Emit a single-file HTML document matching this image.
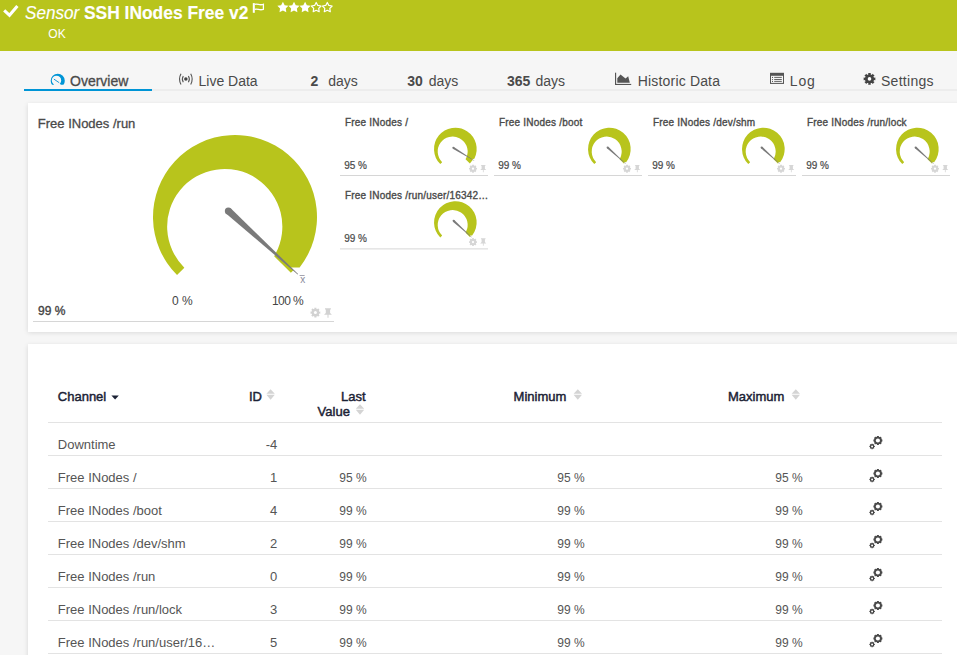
<!DOCTYPE html>
<html><head><meta charset="utf-8"><style>
html,body{margin:0;padding:0;width:957px;height:655px;overflow:hidden;background:#f6f6f6;position:relative;font-family:"Liberation Sans", sans-serif}
.t{position:absolute;white-space:nowrap;font-family:"Liberation Sans", sans-serif}
svg{overflow:visible}
</style></head><body>
<div style="position:absolute;left:0;top:0;width:957px;height:51px;background:#b8c41c"></div>
<svg style="position:absolute;left:0;top:0" width="40" height="30"><path d="M4.2,10.4 L9.5,15.3 L17.4,6.1" fill="none" stroke="#fff" stroke-width="3.1" stroke-linecap="butt" stroke-linejoin="miter"/></svg>
<div class="t" style="left:25.00px;top:4.04px;font-size:18.5px;line-height:18.5px;color:#fff;font-weight:normal;font-style:italic;transform:scaleX(0.925);transform-origin:0 0;-webkit-text-stroke:0.15px #fff">Sensor</div>
<div class="t" style="left:84.40px;top:4.04px;font-size:18.5px;line-height:18.5px;color:#fff;font-weight:bold;font-style:normal;transform:scaleX(0.94);transform-origin:0 0;-webkit-text-stroke:0.15px #fff">SSH INodes Free v2</div>
<svg style="position:absolute;left:0;top:0" width="280" height="16"><rect x="252.8" y="3.1" width="2" height="9.7" fill="#fff"/><path d="M254.6,4.4 C257.5,3.2 259.5,5.8 263.4,4.3 V9.3 C259.5,10.8 257.5,8.2 254.6,9.4" fill="none" stroke="#fff" stroke-width="1.3"/></svg>
<svg style="position:absolute;left:0;top:0" width="400" height="20"><path d="M282.90,1.80 L284.67,5.16 L288.42,5.81 L285.77,8.53 L286.31,12.29 L282.90,10.62 L279.49,12.29 L280.03,8.53 L277.38,5.81 L281.13,5.16 Z" fill="#fff"/><path d="M294.00,1.80 L295.77,5.16 L299.52,5.81 L296.87,8.53 L297.41,12.29 L294.00,10.62 L290.59,12.29 L291.13,8.53 L288.48,5.81 L292.23,5.16 Z" fill="#fff"/><path d="M305.10,1.80 L306.87,5.16 L310.62,5.81 L307.97,8.53 L308.51,12.29 L305.10,10.62 L301.69,12.29 L302.23,8.53 L299.58,5.81 L303.33,5.16 Z" fill="#fff"/><path d="M316.20,2.50 L317.76,5.45 L321.05,6.02 L318.72,8.42 L319.20,11.73 L316.20,10.25 L313.20,11.73 L313.68,8.42 L311.35,6.02 L314.64,5.45 Z" fill="none" stroke="#fff" stroke-width="1.2" stroke-linejoin="round"/><path d="M327.30,2.50 L328.86,5.45 L332.15,6.02 L329.82,8.42 L330.30,11.73 L327.30,10.25 L324.30,11.73 L324.78,8.42 L322.45,6.02 L325.74,5.45 Z" fill="none" stroke="#fff" stroke-width="1.2" stroke-linejoin="round"/></svg>
<div class="t" style="left:48.30px;top:28.04px;font-size:12px;line-height:12px;color:#fff;font-weight:normal;font-style:normal;">OK</div>
<div style="position:absolute;left:152px;top:89px;width:805px;height:2px;background:#ededed"></div>
<div style="position:absolute;left:24px;top:89px;width:128px;height:2px;background:#0095d6"></div>
<svg style="position:absolute;left:0;top:0" width="200" height="100"><defs><clipPath id="ovc"><path d="M40,60 H80 V84.7 H60.8 L57.5,80 L53.6,84.7 H40 Z"/></clipPath></defs><path clip-path="url(#ovc)" fill-rule="evenodd" d="M50.7,80.75 a7.05,7.05 0 1 0 14.1,0 a7.05,7.05 0 1 0 -14.1,0 Z M51.8,80.4 a4.7,4.7 0 1 0 9.4,0 a4.7,4.7 0 1 0 -9.4,0 Z" fill="#0095d6"/><path d="M54.2,79.3 L58.9,82.5" stroke="#1a9ad6" stroke-width="1.0" stroke-linecap="round"/></svg>
<div class="t" style="left:70.00px;top:73.85px;font-size:14px;line-height:14px;color:#4a4a4a;font-weight:normal;font-style:normal;-webkit-text-stroke:0.3px #4a4a4a">Overview</div>
<svg style="position:absolute;left:0;top:0" width="260" height="100"><circle cx="185.85" cy="79.1" r="1.75" fill="#444"/><path d="M181,73.7 A11.1,11.1 0 0 0 181,84.4" fill="none" stroke="#555" stroke-width="1.1"/><path d="M190.7,73.7 A11.1,11.1 0 0 1 190.7,84.4" fill="none" stroke="#555" stroke-width="1.1"/><path d="M183.3,76 A5.8,5.8 0 0 0 183.3,82.2" fill="none" stroke="#555" stroke-width="1.1"/><path d="M188.4,76 A5.8,5.8 0 0 1 188.4,82.2" fill="none" stroke="#555" stroke-width="1.1"/></svg>
<div class="t" style="left:198.50px;top:73.85px;font-size:14px;line-height:14px;color:#4a4a4a;font-weight:normal;font-style:normal;">Live Data</div>
<div class="t" style="left:310.50px;top:73.85px;font-size:14px;line-height:14px;color:#4a4a4a;font-weight:bold;font-style:normal;">2</div>
<div class="t" style="left:328.30px;top:73.85px;font-size:14px;line-height:14px;color:#4a4a4a;font-weight:normal;font-style:normal;">days</div>
<div class="t" style="left:407.30px;top:73.85px;font-size:14px;line-height:14px;color:#4a4a4a;font-weight:bold;font-style:normal;">30</div>
<div class="t" style="left:428.80px;top:73.85px;font-size:14px;line-height:14px;color:#4a4a4a;font-weight:normal;font-style:normal;">days</div>
<div class="t" style="left:507.00px;top:73.85px;font-size:14px;line-height:14px;color:#4a4a4a;font-weight:bold;font-style:normal;">365</div>
<div class="t" style="left:535.50px;top:73.85px;font-size:14px;line-height:14px;color:#4a4a4a;font-weight:normal;font-style:normal;">days</div>
<svg style="position:absolute;left:0;top:0" width="957" height="100"><rect x="615" y="72.7" width="1.15" height="12.3" fill="#555"/><rect x="615" y="83.9" width="16.2" height="1.1" fill="#555"/><path d="M617.3,82.8 V78.2 L620.5,74.6 L625.5,78.6 L628.2,76.2 L629.8,82.8 Z" fill="#555"/><rect x="770.5" y="73.4" width="13" height="10" fill="none" stroke="#555" stroke-width="1"/><rect x="770" y="72.9" width="14" height="2.9" fill="#555"/><path d="M774.2,77.4 H781.8 M774.2,79.5 H781.8 M774.2,81.4 H781.8" stroke="#555" stroke-width="0.9"/><circle cx="772.5" cy="77.4" r="0.55" fill="#555"/><circle cx="772.5" cy="79.5" r="0.55" fill="#555"/><circle cx="772.5" cy="81.4" r="0.55" fill="#555"/><path d="M875.35,77.55 L875.35,80.25 L873.82,79.94 L873.29,81.22 L874.59,82.08 L872.68,83.99 L871.82,82.69 L870.54,83.22 L870.85,84.75 L868.15,84.75 L868.46,83.22 L867.18,82.69 L866.32,83.99 L864.41,82.08 L865.71,81.22 L865.18,79.94 L863.65,80.25 L863.65,77.55 L865.18,77.86 L865.71,76.58 L864.41,75.72 L866.32,73.81 L867.18,75.11 L868.46,74.58 L868.15,73.05 L870.85,73.05 L870.54,74.58 L871.82,75.11 L872.68,73.81 L874.59,75.72 L873.29,76.58 L873.82,77.86 Z" fill="#444"/><circle cx="869.5" cy="78.9" r="4.32" fill="#444"/><circle cx="869.5" cy="78.9" r="1.80" fill="#fff"/></svg>
<div class="t" style="left:637.80px;top:73.85px;font-size:14px;line-height:14px;color:#4a4a4a;font-weight:normal;font-style:normal;letter-spacing:0.17px">Historic Data</div>
<div class="t" style="left:789.80px;top:73.85px;font-size:14px;line-height:14px;color:#4a4a4a;font-weight:normal;font-style:normal;letter-spacing:0.8px">Log</div>
<div class="t" style="left:881.00px;top:73.85px;font-size:14px;line-height:14px;color:#4a4a4a;font-weight:normal;font-style:normal;letter-spacing:0.28px">Settings</div>
<div style="position:absolute;left:28px;top:103px;width:960px;height:229px;background:#fff;box-shadow:0 0.5px 5px rgba(0,0,0,0.13)"></div>
<div class="t" style="left:37.80px;top:116.70px;font-size:13px;line-height:13px;color:#4a4a4a;font-weight:normal;font-style:normal;-webkit-text-stroke:0.3px #4a4a4a">Free INodes /run</div>
<svg style="position:absolute;left:0;top:0" width="957" height="340"><g transform="translate(235,217) scale(1.0)"><path d="M-57.98,57.98 A82.0,82.0 0 1 1 64.62,50.48 L55.10,50.14 L40.50,36.85 A57.6,57.6 0 1 0 -50.65,50.65 Z M40.50,36.85 L58.43,53.17 L55.86,55.86 L39.18,39.18 Z" fill="#b8c41c"/><path d="M-9.01,-3.47 L62.67,57.43 L63.07,56.98 L-4.30,-8.65 Z" fill="#7a7a7a"/><circle cx="-6.66" cy="-6.06" r="3.5" fill="#7a7a7a"/></g><rect x="299.6" y="275" width="5" height="0.9" fill="#9a9aa8"/><path d="M320.27,311.48 L320.27,313.72 L319.19,313.51 L318.73,314.64 L319.64,315.25 L318.05,316.84 L317.44,315.93 L316.31,316.39 L316.52,317.47 L314.28,317.47 L314.49,316.39 L313.36,315.93 L312.75,316.84 L311.16,315.25 L312.07,314.64 L311.61,313.51 L310.53,313.72 L310.53,311.48 L311.61,311.69 L312.07,310.56 L311.16,309.95 L312.75,308.36 L313.36,309.27 L314.49,308.81 L314.28,307.73 L316.52,307.73 L316.31,308.81 L317.44,309.27 L318.05,308.36 L319.64,309.95 L318.73,310.56 L319.19,311.69 Z" fill="#d2d2d2"/><circle cx="315.4" cy="312.6" r="3.70" fill="#d2d2d2"/><circle cx="315.4" cy="312.6" r="1.50" fill="#fff"/><path transform="translate(324,308.2) scale(1.0)" d="M1,0 H6.9 V1.2 H6.1 V4.9 L7.9,6.6 H4.5 V9.6 H3.5 V6.6 H0 L1.8,4.9 V1.2 H1 Z" fill="#d2d2d2"/><rect x="33" y="321" width="301" height="1" fill="#d6d6d6"/><g transform="translate(455.35,149.05) scale(0.26)"><path d="M-57.98,57.98 A82.0,82.0 0 1 1 72.93,37.48 L63.52,38.93 L44.56,27.31 A57.6,57.6 0 1 0 -50.65,50.65 Z M44.56,27.31 L67.36,41.28 L55.86,55.86 L39.18,39.18 Z" fill="#b8c41c"/><path d="M-9.76,-1.29 L72.32,44.67 L72.63,44.16 L-5.58,-8.11 Z" fill="#7a7a7a"/><circle cx="-7.67" cy="-4.70" r="4.0" fill="#7a7a7a"/></g><path d="M476.99,167.73 L476.99,169.57 L476.11,169.40 L475.73,170.32 L476.48,170.82 L475.17,172.13 L474.67,171.38 L473.75,171.76 L473.92,172.64 L472.08,172.64 L472.25,171.76 L471.33,171.38 L470.83,172.13 L469.52,170.82 L470.27,170.32 L469.89,169.40 L469.01,169.57 L469.01,167.73 L469.89,167.90 L470.27,166.98 L469.52,166.48 L470.83,165.17 L471.33,165.92 L472.25,165.54 L472.08,164.66 L473.92,164.66 L473.75,165.54 L474.67,165.92 L475.17,165.17 L476.48,166.48 L475.73,166.98 L476.11,167.90 Z" fill="#d6d6d6"/><circle cx="473" cy="168.65" r="3.03" fill="#d6d6d6"/><circle cx="473" cy="168.65" r="1.15" fill="#fff"/><path transform="translate(480.2,164.9) scale(0.772)" d="M1,0 H6.9 V1.2 H6.1 V4.9 L7.9,6.6 H4.5 V9.6 H3.5 V6.6 H0 L1.8,4.9 V1.2 H1 Z" fill="#d6d6d6"/><rect x="340" y="175" width="148" height="1" fill="#d6d6d6"/><g transform="translate(609.35,149.05) scale(0.26)"><path d="M-57.98,57.98 A82.0,82.0 0 1 1 64.62,50.48 L55.10,50.14 L40.50,36.85 A57.6,57.6 0 1 0 -50.65,50.65 Z M40.50,36.85 L58.43,53.17 L55.86,55.86 L39.18,39.18 Z" fill="#b8c41c"/><path d="M-9.35,-3.10 L62.67,57.43 L63.07,56.98 L-3.96,-9.02 Z" fill="#7a7a7a"/><circle cx="-6.66" cy="-6.06" r="4.0" fill="#7a7a7a"/></g><path d="M630.99,167.73 L630.99,169.57 L630.11,169.40 L629.73,170.32 L630.48,170.82 L629.17,172.13 L628.67,171.38 L627.75,171.76 L627.92,172.64 L626.08,172.64 L626.25,171.76 L625.33,171.38 L624.83,172.13 L623.52,170.82 L624.27,170.32 L623.89,169.40 L623.01,169.57 L623.01,167.73 L623.89,167.90 L624.27,166.98 L623.52,166.48 L624.83,165.17 L625.33,165.92 L626.25,165.54 L626.08,164.66 L627.92,164.66 L627.75,165.54 L628.67,165.92 L629.17,165.17 L630.48,166.48 L629.73,166.98 L630.11,167.90 Z" fill="#d6d6d6"/><circle cx="627" cy="168.65" r="3.03" fill="#d6d6d6"/><circle cx="627" cy="168.65" r="1.15" fill="#fff"/><path transform="translate(634.2,164.9) scale(0.772)" d="M1,0 H6.9 V1.2 H6.1 V4.9 L7.9,6.6 H4.5 V9.6 H3.5 V6.6 H0 L1.8,4.9 V1.2 H1 Z" fill="#d6d6d6"/><rect x="494" y="175" width="148" height="1" fill="#d6d6d6"/><g transform="translate(763.35,149.05) scale(0.26)"><path d="M-57.98,57.98 A82.0,82.0 0 1 1 64.62,50.48 L55.10,50.14 L40.50,36.85 A57.6,57.6 0 1 0 -50.65,50.65 Z M40.50,36.85 L58.43,53.17 L55.86,55.86 L39.18,39.18 Z" fill="#b8c41c"/><path d="M-9.35,-3.10 L62.67,57.43 L63.07,56.98 L-3.96,-9.02 Z" fill="#7a7a7a"/><circle cx="-6.66" cy="-6.06" r="4.0" fill="#7a7a7a"/></g><path d="M784.99,167.73 L784.99,169.57 L784.11,169.40 L783.73,170.32 L784.48,170.82 L783.17,172.13 L782.67,171.38 L781.75,171.76 L781.92,172.64 L780.08,172.64 L780.25,171.76 L779.33,171.38 L778.83,172.13 L777.52,170.82 L778.27,170.32 L777.89,169.40 L777.01,169.57 L777.01,167.73 L777.89,167.90 L778.27,166.98 L777.52,166.48 L778.83,165.17 L779.33,165.92 L780.25,165.54 L780.08,164.66 L781.92,164.66 L781.75,165.54 L782.67,165.92 L783.17,165.17 L784.48,166.48 L783.73,166.98 L784.11,167.90 Z" fill="#d6d6d6"/><circle cx="781" cy="168.65" r="3.03" fill="#d6d6d6"/><circle cx="781" cy="168.65" r="1.15" fill="#fff"/><path transform="translate(788.2,164.9) scale(0.772)" d="M1,0 H6.9 V1.2 H6.1 V4.9 L7.9,6.6 H4.5 V9.6 H3.5 V6.6 H0 L1.8,4.9 V1.2 H1 Z" fill="#d6d6d6"/><rect x="648" y="175" width="148" height="1" fill="#d6d6d6"/><g transform="translate(917.35,149.05) scale(0.26)"><path d="M-57.98,57.98 A82.0,82.0 0 1 1 64.62,50.48 L55.10,50.14 L40.50,36.85 A57.6,57.6 0 1 0 -50.65,50.65 Z M40.50,36.85 L58.43,53.17 L55.86,55.86 L39.18,39.18 Z" fill="#b8c41c"/><path d="M-9.35,-3.10 L62.67,57.43 L63.07,56.98 L-3.96,-9.02 Z" fill="#7a7a7a"/><circle cx="-6.66" cy="-6.06" r="4.0" fill="#7a7a7a"/></g><path d="M938.99,167.73 L938.99,169.57 L938.11,169.40 L937.73,170.32 L938.48,170.82 L937.17,172.13 L936.67,171.38 L935.75,171.76 L935.92,172.64 L934.08,172.64 L934.25,171.76 L933.33,171.38 L932.83,172.13 L931.52,170.82 L932.27,170.32 L931.89,169.40 L931.01,169.57 L931.01,167.73 L931.89,167.90 L932.27,166.98 L931.52,166.48 L932.83,165.17 L933.33,165.92 L934.25,165.54 L934.08,164.66 L935.92,164.66 L935.75,165.54 L936.67,165.92 L937.17,165.17 L938.48,166.48 L937.73,166.98 L938.11,167.90 Z" fill="#d6d6d6"/><circle cx="935" cy="168.65" r="3.03" fill="#d6d6d6"/><circle cx="935" cy="168.65" r="1.15" fill="#fff"/><path transform="translate(942.2,164.9) scale(0.772)" d="M1,0 H6.9 V1.2 H6.1 V4.9 L7.9,6.6 H4.5 V9.6 H3.5 V6.6 H0 L1.8,4.9 V1.2 H1 Z" fill="#d6d6d6"/><rect x="802" y="175" width="148" height="1" fill="#d6d6d6"/><g transform="translate(455.35,222.45000000000002) scale(0.26)"><path d="M-57.98,57.98 A82.0,82.0 0 1 1 64.62,50.48 L55.10,50.14 L40.50,36.85 A57.6,57.6 0 1 0 -50.65,50.65 Z M40.50,36.85 L58.43,53.17 L55.86,55.86 L39.18,39.18 Z" fill="#b8c41c"/><path d="M-9.35,-3.10 L62.67,57.43 L63.07,56.98 L-3.96,-9.02 Z" fill="#7a7a7a"/><circle cx="-6.66" cy="-6.06" r="4.0" fill="#7a7a7a"/></g><path d="M476.99,241.13 L476.99,242.97 L476.11,242.80 L475.73,243.72 L476.48,244.22 L475.17,245.53 L474.67,244.78 L473.75,245.16 L473.92,246.04 L472.08,246.04 L472.25,245.16 L471.33,244.78 L470.83,245.53 L469.52,244.22 L470.27,243.72 L469.89,242.80 L469.01,242.97 L469.01,241.13 L469.89,241.30 L470.27,240.38 L469.52,239.88 L470.83,238.57 L471.33,239.32 L472.25,238.94 L472.08,238.06 L473.92,238.06 L473.75,238.94 L474.67,239.32 L475.17,238.57 L476.48,239.88 L475.73,240.38 L476.11,241.30 Z" fill="#d6d6d6"/><circle cx="473" cy="242.05" r="3.03" fill="#d6d6d6"/><circle cx="473" cy="242.05" r="1.15" fill="#fff"/><path transform="translate(480.2,238.3) scale(0.772)" d="M1,0 H6.9 V1.2 H6.1 V4.9 L7.9,6.6 H4.5 V9.6 H3.5 V6.6 H0 L1.8,4.9 V1.2 H1 Z" fill="#d6d6d6"/><rect x="340" y="248.4" width="148" height="1" fill="#d6d6d6"/></svg>
<div class="t" style="left:300.20px;top:275.14px;font-size:10px;line-height:10px;color:#8a8a9a;font-weight:normal;font-style:normal;">x</div>
<div class="t" style="left:172.00px;top:294.84px;font-size:12px;line-height:12px;color:#444;font-weight:normal;font-style:normal;">0 %</div>
<div class="t" style="left:272.00px;top:294.54px;font-size:12px;line-height:12px;color:#444;font-weight:normal;font-style:normal;letter-spacing:-0.6px">100 %</div>
<div class="t" style="left:38.00px;top:304.74px;font-size:12px;line-height:12px;color:#444;font-weight:normal;font-style:normal;-webkit-text-stroke:0.35px #444">99 %</div>
<div class="t" style="left:345.00px;top:117.73px;font-size:10px;line-height:10px;color:#4a4a4a;font-weight:normal;font-style:normal;-webkit-text-stroke:0.35px #4a4a4a;letter-spacing:0.2px">Free INodes /</div>
<div class="t" style="left:344.20px;top:160.94px;font-size:10px;line-height:10px;color:#4a4a4a;font-weight:normal;font-style:normal;-webkit-text-stroke:0.2px #4a4a4a">95 %</div>
<div class="t" style="left:499.00px;top:117.73px;font-size:10px;line-height:10px;color:#4a4a4a;font-weight:normal;font-style:normal;-webkit-text-stroke:0.35px #4a4a4a;letter-spacing:0.2px">Free INodes /boot</div>
<div class="t" style="left:498.20px;top:160.94px;font-size:10px;line-height:10px;color:#4a4a4a;font-weight:normal;font-style:normal;-webkit-text-stroke:0.2px #4a4a4a">99 %</div>
<div class="t" style="left:653.00px;top:117.73px;font-size:10px;line-height:10px;color:#4a4a4a;font-weight:normal;font-style:normal;-webkit-text-stroke:0.35px #4a4a4a;letter-spacing:0.2px">Free INodes /dev/shm</div>
<div class="t" style="left:652.20px;top:160.94px;font-size:10px;line-height:10px;color:#4a4a4a;font-weight:normal;font-style:normal;-webkit-text-stroke:0.2px #4a4a4a">99 %</div>
<div class="t" style="left:807.00px;top:117.73px;font-size:10px;line-height:10px;color:#4a4a4a;font-weight:normal;font-style:normal;-webkit-text-stroke:0.35px #4a4a4a;letter-spacing:0.2px">Free INodes /run/lock</div>
<div class="t" style="left:806.20px;top:160.94px;font-size:10px;line-height:10px;color:#4a4a4a;font-weight:normal;font-style:normal;-webkit-text-stroke:0.2px #4a4a4a">99 %</div>
<div class="t" style="left:345.00px;top:191.14px;font-size:10px;line-height:10px;color:#4a4a4a;font-weight:normal;font-style:normal;-webkit-text-stroke:0.35px #4a4a4a;letter-spacing:0.2px">Free INodes /run/user/16342…</div>
<div class="t" style="left:344.20px;top:234.34px;font-size:10px;line-height:10px;color:#4a4a4a;font-weight:normal;font-style:normal;-webkit-text-stroke:0.2px #4a4a4a">99 %</div>
<div style="position:absolute;left:28px;top:344px;width:960px;height:400px;background:#fff;box-shadow:0 0.5px 5px rgba(0,0,0,0.13)"></div>
<div class="t" style="left:57.80px;top:389.80px;font-size:13px;line-height:13px;color:#1b2235;font-weight:normal;font-style:normal;-webkit-text-stroke:0.45px #1b2235">Channel</div>
<div class="t" style="left:249.00px;top:389.90px;font-size:13px;line-height:13px;color:#1b2235;font-weight:normal;font-style:normal;-webkit-text-stroke:0.45px #1b2235">ID</div>
<div class="t" style="left:341.00px;top:389.90px;font-size:13px;line-height:13px;color:#1b2235;font-weight:normal;font-style:normal;-webkit-text-stroke:0.45px #1b2235">Last</div>
<div class="t" style="left:317.60px;top:404.60px;font-size:13px;line-height:13px;color:#1b2235;font-weight:normal;font-style:normal;-webkit-text-stroke:0.45px #1b2235">Value</div>
<div class="t" style="left:513.60px;top:389.90px;font-size:13px;line-height:13px;color:#1b2235;font-weight:normal;font-style:normal;-webkit-text-stroke:0.45px #1b2235">Minimum</div>
<div class="t" style="left:728.00px;top:389.90px;font-size:13px;line-height:13px;color:#1b2235;font-weight:normal;font-style:normal;-webkit-text-stroke:0.45px #1b2235">Maximum</div>
<svg style="position:absolute;left:0;top:0" width="957" height="655"><path d="M111.4,395.6 H118.8 L115.1,399.6 Z" fill="#1b2235"/><path d="M266.4,393.8 L270.59999999999997,389.2 L274.79999999999995,393.8 Z M266.4,394.8 L270.59999999999997,399.7 L274.79999999999995,394.8 Z" fill="#d4d4d4"/><path d="M355.8,408.8 L360.0,404.2 L364.2,408.8 Z M355.8,409.8 L360.0,414.7 L364.2,409.8 Z" fill="#d4d4d4"/><path d="M573.6,393.8 L577.8000000000001,389.2 L582.0,393.8 Z M573.6,394.8 L577.8000000000001,399.7 L582.0,394.8 Z" fill="#d4d4d4"/><path d="M791.6,393.8 L795.8000000000001,389.2 L800.0,393.8 Z M791.6,394.8 L795.8000000000001,399.7 L800.0,394.8 Z" fill="#d4d4d4"/><rect x="48" y="422" width="894" height="1" fill="#e3e3e3"/><rect x="48" y="455" width="894" height="1" fill="#e3e3e3"/><path d="M882.38,439.47 L882.38,441.53 L881.66,441.40 L881.19,442.52 L881.80,442.94 L880.34,444.40 L879.92,443.79 L878.80,444.26 L878.93,444.98 L876.87,444.98 L877.00,444.26 L875.88,443.79 L875.46,444.40 L874.00,442.94 L874.61,442.52 L874.14,441.40 L873.42,441.53 L873.42,439.47 L874.14,439.60 L874.61,438.48 L874.00,438.06 L875.46,436.60 L875.88,437.21 L877.00,436.74 L876.87,436.02 L878.93,436.02 L878.80,436.74 L879.92,437.21 L880.34,436.60 L881.80,438.06 L881.19,438.48 L881.66,439.60 Z" fill="#4a4a4a"/><circle cx="877.9" cy="440.5" r="3.68" fill="#4a4a4a"/><circle cx="877.9" cy="440.5" r="2.07" fill="#fff"/><path d="M874.83,445.77 L874.83,447.03 L874.14,446.89 L873.89,447.50 L874.47,447.88 L873.58,448.77 L873.20,448.19 L872.59,448.44 L872.73,449.13 L871.47,449.13 L871.61,448.44 L871.00,448.19 L870.62,448.77 L869.73,447.88 L870.31,447.50 L870.06,446.89 L869.37,447.03 L869.37,445.77 L870.06,445.91 L870.31,445.30 L869.73,444.92 L870.62,444.03 L871.00,444.61 L871.61,444.36 L871.47,443.67 L872.73,443.67 L872.59,444.36 L873.20,444.61 L873.58,444.03 L874.47,444.92 L873.89,445.30 L874.14,445.91 Z" fill="#444"/><circle cx="872.1" cy="446.4" r="2.02" fill="#444"/><circle cx="872.1" cy="446.4" r="0.98" fill="#fff"/><rect x="48" y="488" width="894" height="1" fill="#e3e3e3"/><path d="M882.38,472.47 L882.38,474.53 L881.66,474.40 L881.19,475.52 L881.80,475.94 L880.34,477.40 L879.92,476.79 L878.80,477.26 L878.93,477.98 L876.87,477.98 L877.00,477.26 L875.88,476.79 L875.46,477.40 L874.00,475.94 L874.61,475.52 L874.14,474.40 L873.42,474.53 L873.42,472.47 L874.14,472.60 L874.61,471.48 L874.00,471.06 L875.46,469.60 L875.88,470.21 L877.00,469.74 L876.87,469.02 L878.93,469.02 L878.80,469.74 L879.92,470.21 L880.34,469.60 L881.80,471.06 L881.19,471.48 L881.66,472.60 Z" fill="#4a4a4a"/><circle cx="877.9" cy="473.5" r="3.68" fill="#4a4a4a"/><circle cx="877.9" cy="473.5" r="2.07" fill="#fff"/><path d="M874.83,478.77 L874.83,480.03 L874.14,479.89 L873.89,480.50 L874.47,480.88 L873.58,481.77 L873.20,481.19 L872.59,481.44 L872.73,482.13 L871.47,482.13 L871.61,481.44 L871.00,481.19 L870.62,481.77 L869.73,480.88 L870.31,480.50 L870.06,479.89 L869.37,480.03 L869.37,478.77 L870.06,478.91 L870.31,478.30 L869.73,477.92 L870.62,477.03 L871.00,477.61 L871.61,477.36 L871.47,476.67 L872.73,476.67 L872.59,477.36 L873.20,477.61 L873.58,477.03 L874.47,477.92 L873.89,478.30 L874.14,478.91 Z" fill="#444"/><circle cx="872.1" cy="479.4" r="2.02" fill="#444"/><circle cx="872.1" cy="479.4" r="0.98" fill="#fff"/><rect x="48" y="521" width="894" height="1" fill="#e3e3e3"/><path d="M882.38,505.47 L882.38,507.53 L881.66,507.40 L881.19,508.52 L881.80,508.94 L880.34,510.40 L879.92,509.79 L878.80,510.26 L878.93,510.98 L876.87,510.98 L877.00,510.26 L875.88,509.79 L875.46,510.40 L874.00,508.94 L874.61,508.52 L874.14,507.40 L873.42,507.53 L873.42,505.47 L874.14,505.60 L874.61,504.48 L874.00,504.06 L875.46,502.60 L875.88,503.21 L877.00,502.74 L876.87,502.02 L878.93,502.02 L878.80,502.74 L879.92,503.21 L880.34,502.60 L881.80,504.06 L881.19,504.48 L881.66,505.60 Z" fill="#4a4a4a"/><circle cx="877.9" cy="506.5" r="3.68" fill="#4a4a4a"/><circle cx="877.9" cy="506.5" r="2.07" fill="#fff"/><path d="M874.83,511.77 L874.83,513.03 L874.14,512.89 L873.89,513.50 L874.47,513.88 L873.58,514.77 L873.20,514.19 L872.59,514.44 L872.73,515.13 L871.47,515.13 L871.61,514.44 L871.00,514.19 L870.62,514.77 L869.73,513.88 L870.31,513.50 L870.06,512.89 L869.37,513.03 L869.37,511.77 L870.06,511.91 L870.31,511.30 L869.73,510.92 L870.62,510.03 L871.00,510.61 L871.61,510.36 L871.47,509.67 L872.73,509.67 L872.59,510.36 L873.20,510.61 L873.58,510.03 L874.47,510.92 L873.89,511.30 L874.14,511.91 Z" fill="#444"/><circle cx="872.1" cy="512.4" r="2.02" fill="#444"/><circle cx="872.1" cy="512.4" r="0.98" fill="#fff"/><rect x="48" y="554" width="894" height="1" fill="#e3e3e3"/><path d="M882.38,538.47 L882.38,540.53 L881.66,540.40 L881.19,541.52 L881.80,541.94 L880.34,543.40 L879.92,542.79 L878.80,543.26 L878.93,543.98 L876.87,543.98 L877.00,543.26 L875.88,542.79 L875.46,543.40 L874.00,541.94 L874.61,541.52 L874.14,540.40 L873.42,540.53 L873.42,538.47 L874.14,538.60 L874.61,537.48 L874.00,537.06 L875.46,535.60 L875.88,536.21 L877.00,535.74 L876.87,535.02 L878.93,535.02 L878.80,535.74 L879.92,536.21 L880.34,535.60 L881.80,537.06 L881.19,537.48 L881.66,538.60 Z" fill="#4a4a4a"/><circle cx="877.9" cy="539.5" r="3.68" fill="#4a4a4a"/><circle cx="877.9" cy="539.5" r="2.07" fill="#fff"/><path d="M874.83,544.77 L874.83,546.03 L874.14,545.89 L873.89,546.50 L874.47,546.88 L873.58,547.77 L873.20,547.19 L872.59,547.44 L872.73,548.13 L871.47,548.13 L871.61,547.44 L871.00,547.19 L870.62,547.77 L869.73,546.88 L870.31,546.50 L870.06,545.89 L869.37,546.03 L869.37,544.77 L870.06,544.91 L870.31,544.30 L869.73,543.92 L870.62,543.03 L871.00,543.61 L871.61,543.36 L871.47,542.67 L872.73,542.67 L872.59,543.36 L873.20,543.61 L873.58,543.03 L874.47,543.92 L873.89,544.30 L874.14,544.91 Z" fill="#444"/><circle cx="872.1" cy="545.4" r="2.02" fill="#444"/><circle cx="872.1" cy="545.4" r="0.98" fill="#fff"/><rect x="48" y="587" width="894" height="1" fill="#e3e3e3"/><path d="M882.38,571.47 L882.38,573.53 L881.66,573.40 L881.19,574.52 L881.80,574.94 L880.34,576.40 L879.92,575.79 L878.80,576.26 L878.93,576.98 L876.87,576.98 L877.00,576.26 L875.88,575.79 L875.46,576.40 L874.00,574.94 L874.61,574.52 L874.14,573.40 L873.42,573.53 L873.42,571.47 L874.14,571.60 L874.61,570.48 L874.00,570.06 L875.46,568.60 L875.88,569.21 L877.00,568.74 L876.87,568.02 L878.93,568.02 L878.80,568.74 L879.92,569.21 L880.34,568.60 L881.80,570.06 L881.19,570.48 L881.66,571.60 Z" fill="#4a4a4a"/><circle cx="877.9" cy="572.5" r="3.68" fill="#4a4a4a"/><circle cx="877.9" cy="572.5" r="2.07" fill="#fff"/><path d="M874.83,577.77 L874.83,579.03 L874.14,578.89 L873.89,579.50 L874.47,579.88 L873.58,580.77 L873.20,580.19 L872.59,580.44 L872.73,581.13 L871.47,581.13 L871.61,580.44 L871.00,580.19 L870.62,580.77 L869.73,579.88 L870.31,579.50 L870.06,578.89 L869.37,579.03 L869.37,577.77 L870.06,577.91 L870.31,577.30 L869.73,576.92 L870.62,576.03 L871.00,576.61 L871.61,576.36 L871.47,575.67 L872.73,575.67 L872.59,576.36 L873.20,576.61 L873.58,576.03 L874.47,576.92 L873.89,577.30 L874.14,577.91 Z" fill="#444"/><circle cx="872.1" cy="578.4" r="2.02" fill="#444"/><circle cx="872.1" cy="578.4" r="0.98" fill="#fff"/><rect x="48" y="620" width="894" height="1" fill="#e3e3e3"/><path d="M882.38,604.47 L882.38,606.53 L881.66,606.40 L881.19,607.52 L881.80,607.94 L880.34,609.40 L879.92,608.79 L878.80,609.26 L878.93,609.98 L876.87,609.98 L877.00,609.26 L875.88,608.79 L875.46,609.40 L874.00,607.94 L874.61,607.52 L874.14,606.40 L873.42,606.53 L873.42,604.47 L874.14,604.60 L874.61,603.48 L874.00,603.06 L875.46,601.60 L875.88,602.21 L877.00,601.74 L876.87,601.02 L878.93,601.02 L878.80,601.74 L879.92,602.21 L880.34,601.60 L881.80,603.06 L881.19,603.48 L881.66,604.60 Z" fill="#4a4a4a"/><circle cx="877.9" cy="605.5" r="3.68" fill="#4a4a4a"/><circle cx="877.9" cy="605.5" r="2.07" fill="#fff"/><path d="M874.83,610.77 L874.83,612.03 L874.14,611.89 L873.89,612.50 L874.47,612.88 L873.58,613.77 L873.20,613.19 L872.59,613.44 L872.73,614.13 L871.47,614.13 L871.61,613.44 L871.00,613.19 L870.62,613.77 L869.73,612.88 L870.31,612.50 L870.06,611.89 L869.37,612.03 L869.37,610.77 L870.06,610.91 L870.31,610.30 L869.73,609.92 L870.62,609.03 L871.00,609.61 L871.61,609.36 L871.47,608.67 L872.73,608.67 L872.59,609.36 L873.20,609.61 L873.58,609.03 L874.47,609.92 L873.89,610.30 L874.14,610.91 Z" fill="#444"/><circle cx="872.1" cy="611.4" r="2.02" fill="#444"/><circle cx="872.1" cy="611.4" r="0.98" fill="#fff"/><rect x="48" y="653" width="894" height="1" fill="#e3e3e3"/><path d="M882.38,637.47 L882.38,639.53 L881.66,639.40 L881.19,640.52 L881.80,640.94 L880.34,642.40 L879.92,641.79 L878.80,642.26 L878.93,642.98 L876.87,642.98 L877.00,642.26 L875.88,641.79 L875.46,642.40 L874.00,640.94 L874.61,640.52 L874.14,639.40 L873.42,639.53 L873.42,637.47 L874.14,637.60 L874.61,636.48 L874.00,636.06 L875.46,634.60 L875.88,635.21 L877.00,634.74 L876.87,634.02 L878.93,634.02 L878.80,634.74 L879.92,635.21 L880.34,634.60 L881.80,636.06 L881.19,636.48 L881.66,637.60 Z" fill="#4a4a4a"/><circle cx="877.9" cy="638.5" r="3.68" fill="#4a4a4a"/><circle cx="877.9" cy="638.5" r="2.07" fill="#fff"/><path d="M874.83,643.77 L874.83,645.03 L874.14,644.89 L873.89,645.50 L874.47,645.88 L873.58,646.77 L873.20,646.19 L872.59,646.44 L872.73,647.13 L871.47,647.13 L871.61,646.44 L871.00,646.19 L870.62,646.77 L869.73,645.88 L870.31,645.50 L870.06,644.89 L869.37,645.03 L869.37,643.77 L870.06,643.91 L870.31,643.30 L869.73,642.92 L870.62,642.03 L871.00,642.61 L871.61,642.36 L871.47,641.67 L872.73,641.67 L872.59,642.36 L873.20,642.61 L873.58,642.03 L874.47,642.92 L873.89,643.30 L874.14,643.91 Z" fill="#444"/><circle cx="872.1" cy="644.4" r="2.02" fill="#444"/><circle cx="872.1" cy="644.4" r="0.98" fill="#fff"/></svg>
<div class="t" style="left:57.80px;top:438.00px;font-size:13px;line-height:13px;color:#555;font-weight:normal;font-style:normal;">Downtime</div>
<div class="t" style="right:679.80px;top:438.00px;font-size:13px;line-height:13px;color:#555;font-weight:normal;font-style:normal;text-align:right;">-4</div>
<div class="t" style="left:57.80px;top:471.00px;font-size:13px;line-height:13px;color:#555;font-weight:normal;font-style:normal;">Free INodes /</div>
<div class="t" style="right:679.80px;top:471.00px;font-size:13px;line-height:13px;color:#555;font-weight:normal;font-style:normal;text-align:right;">1</div>
<div class="t" style="right:590.40px;top:471.84px;font-size:12px;line-height:12px;color:#555;font-weight:normal;font-style:normal;text-align:right;">95 %</div>
<div class="t" style="right:372.40px;top:471.84px;font-size:12px;line-height:12px;color:#555;font-weight:normal;font-style:normal;text-align:right;">95 %</div>
<div class="t" style="right:154.40px;top:471.84px;font-size:12px;line-height:12px;color:#555;font-weight:normal;font-style:normal;text-align:right;">95 %</div>
<div class="t" style="left:57.80px;top:504.00px;font-size:13px;line-height:13px;color:#555;font-weight:normal;font-style:normal;">Free INodes /boot</div>
<div class="t" style="right:679.80px;top:504.00px;font-size:13px;line-height:13px;color:#555;font-weight:normal;font-style:normal;text-align:right;">4</div>
<div class="t" style="right:590.40px;top:504.84px;font-size:12px;line-height:12px;color:#555;font-weight:normal;font-style:normal;text-align:right;">99 %</div>
<div class="t" style="right:372.40px;top:504.84px;font-size:12px;line-height:12px;color:#555;font-weight:normal;font-style:normal;text-align:right;">99 %</div>
<div class="t" style="right:154.40px;top:504.84px;font-size:12px;line-height:12px;color:#555;font-weight:normal;font-style:normal;text-align:right;">99 %</div>
<div class="t" style="left:57.80px;top:537.00px;font-size:13px;line-height:13px;color:#555;font-weight:normal;font-style:normal;">Free INodes /dev/shm</div>
<div class="t" style="right:679.80px;top:537.00px;font-size:13px;line-height:13px;color:#555;font-weight:normal;font-style:normal;text-align:right;">2</div>
<div class="t" style="right:590.40px;top:537.84px;font-size:12px;line-height:12px;color:#555;font-weight:normal;font-style:normal;text-align:right;">99 %</div>
<div class="t" style="right:372.40px;top:537.84px;font-size:12px;line-height:12px;color:#555;font-weight:normal;font-style:normal;text-align:right;">99 %</div>
<div class="t" style="right:154.40px;top:537.84px;font-size:12px;line-height:12px;color:#555;font-weight:normal;font-style:normal;text-align:right;">99 %</div>
<div class="t" style="left:57.80px;top:570.00px;font-size:13px;line-height:13px;color:#555;font-weight:normal;font-style:normal;">Free INodes /run</div>
<div class="t" style="right:679.80px;top:570.00px;font-size:13px;line-height:13px;color:#555;font-weight:normal;font-style:normal;text-align:right;">0</div>
<div class="t" style="right:590.40px;top:570.84px;font-size:12px;line-height:12px;color:#555;font-weight:normal;font-style:normal;text-align:right;">99 %</div>
<div class="t" style="right:372.40px;top:570.84px;font-size:12px;line-height:12px;color:#555;font-weight:normal;font-style:normal;text-align:right;">99 %</div>
<div class="t" style="right:154.40px;top:570.84px;font-size:12px;line-height:12px;color:#555;font-weight:normal;font-style:normal;text-align:right;">99 %</div>
<div class="t" style="left:57.80px;top:603.00px;font-size:13px;line-height:13px;color:#555;font-weight:normal;font-style:normal;">Free INodes /run/lock</div>
<div class="t" style="right:679.80px;top:603.00px;font-size:13px;line-height:13px;color:#555;font-weight:normal;font-style:normal;text-align:right;">3</div>
<div class="t" style="right:590.40px;top:603.84px;font-size:12px;line-height:12px;color:#555;font-weight:normal;font-style:normal;text-align:right;">99 %</div>
<div class="t" style="right:372.40px;top:603.84px;font-size:12px;line-height:12px;color:#555;font-weight:normal;font-style:normal;text-align:right;">99 %</div>
<div class="t" style="right:154.40px;top:603.84px;font-size:12px;line-height:12px;color:#555;font-weight:normal;font-style:normal;text-align:right;">99 %</div>
<div class="t" style="left:57.80px;top:636.00px;font-size:13px;line-height:13px;color:#555;font-weight:normal;font-style:normal;">Free INodes /run/user/16…</div>
<div class="t" style="right:679.80px;top:636.00px;font-size:13px;line-height:13px;color:#555;font-weight:normal;font-style:normal;text-align:right;">5</div>
<div class="t" style="right:590.40px;top:636.84px;font-size:12px;line-height:12px;color:#555;font-weight:normal;font-style:normal;text-align:right;">99 %</div>
<div class="t" style="right:372.40px;top:636.84px;font-size:12px;line-height:12px;color:#555;font-weight:normal;font-style:normal;text-align:right;">99 %</div>
<div class="t" style="right:154.40px;top:636.84px;font-size:12px;line-height:12px;color:#555;font-weight:normal;font-style:normal;text-align:right;">99 %</div>
</body></html>
